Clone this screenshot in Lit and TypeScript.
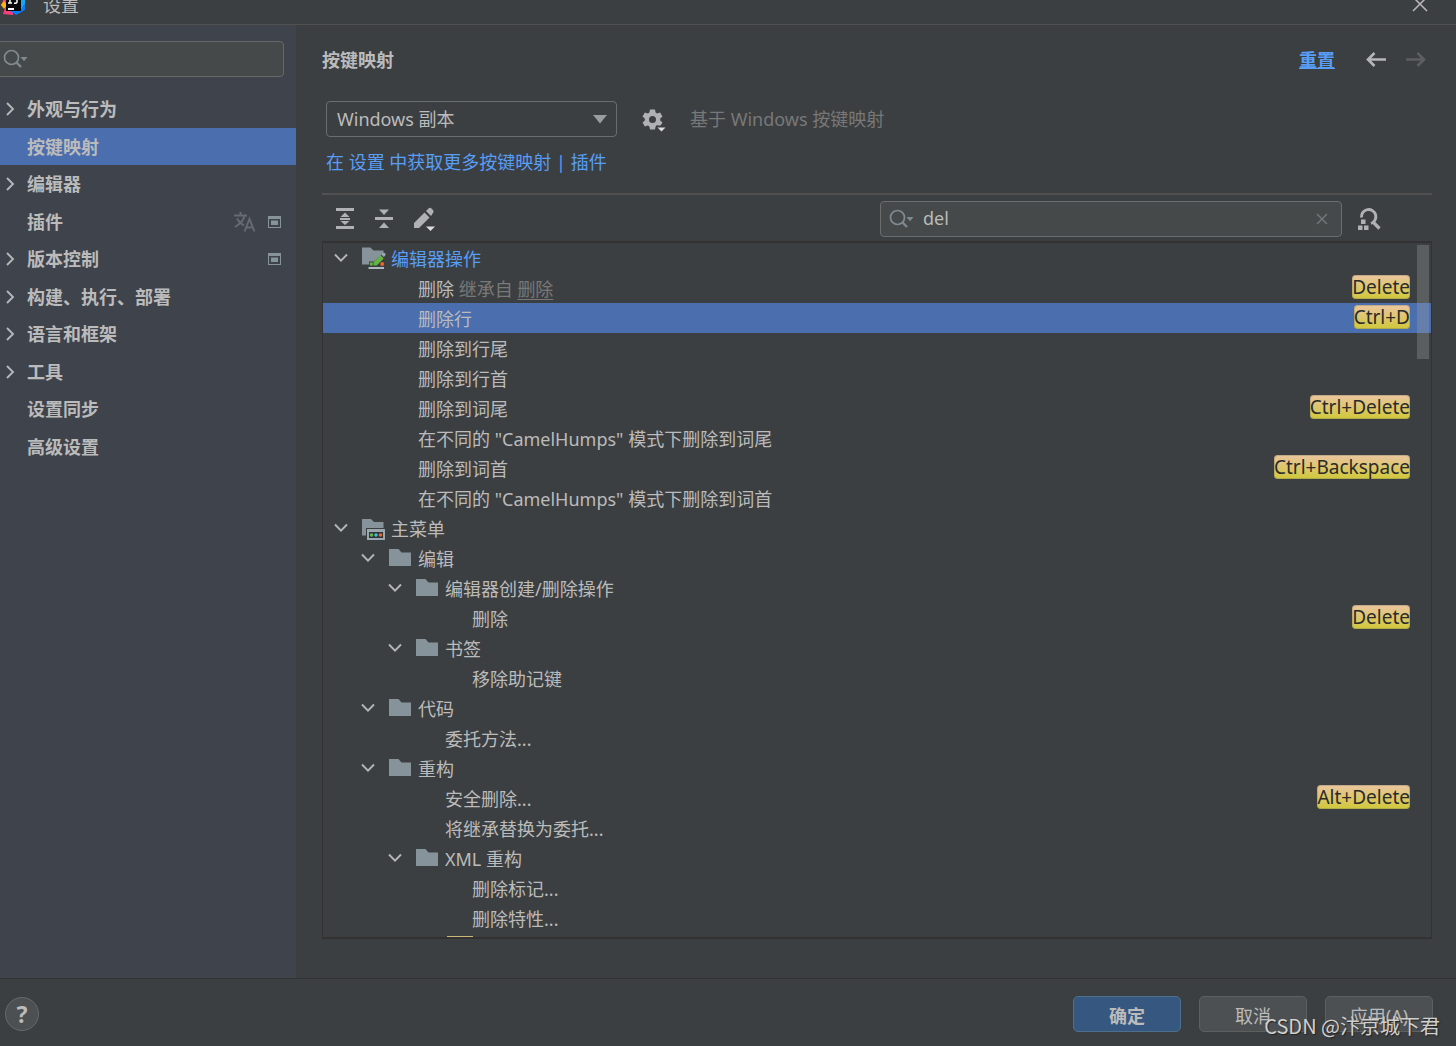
import { LitElement, html, css, svg, nothing } from "lit";
import { customElement, property, state } from "lit/decorators.js";
import { classMap } from "lit/directives/class-map.js";

type TreeIcon = "folder" | "editor" | "menu";

interface TreeRow {
  label: string;
  depth: number;
  icon?: TreeIcon;
  link?: boolean;
  inherited?: string;
  shortcut?: string;
}

interface NavItem {
  label: string;
  expandable?: boolean;
  translated?: boolean;
  project?: boolean;
}

const NAV: NavItem[] = [
  { label: "外观与行为", expandable: true },
  { label: "按键映射" },
  { label: "编辑器", expandable: true },
  { label: "插件", translated: true, project: true },
  { label: "版本控制", expandable: true, project: true },
  { label: "构建、执行、部署", expandable: true },
  { label: "语言和框架", expandable: true },
  { label: "工具", expandable: true },
  { label: "设置同步" },
  { label: "高级设置" },
];

const ROWS: TreeRow[] = [
  { label: "编辑器操作", depth: 0, icon: "editor", link: true },
  { label: "删除", depth: 1, inherited: "删除", shortcut: "Delete" },
  { label: "删除行", depth: 1, shortcut: "Ctrl+D" },
  { label: "删除到行尾", depth: 1 },
  { label: "删除到行首", depth: 1 },
  { label: "删除到词尾", depth: 1, shortcut: "Ctrl+Delete" },
  { label: '在不同的 "CamelHumps" 模式下删除到词尾', depth: 1 },
  { label: "删除到词首", depth: 1, shortcut: "Ctrl+Backspace" },
  { label: '在不同的 "CamelHumps" 模式下删除到词首', depth: 1 },
  { label: "主菜单", depth: 0, icon: "menu" },
  { label: "编辑", depth: 1, icon: "folder" },
  { label: "编辑器创建/删除操作", depth: 2, icon: "folder" },
  { label: "删除", depth: 3, shortcut: "Delete" },
  { label: "书签", depth: 2, icon: "folder" },
  { label: "移除助记键", depth: 3 },
  { label: "代码", depth: 1, icon: "folder" },
  { label: "委托方法...", depth: 2 },
  { label: "重构", depth: 1, icon: "folder" },
  { label: "安全删除...", depth: 2, shortcut: "Alt+Delete" },
  { label: "将继承替换为委托...", depth: 2 },
  { label: "XML 重构", depth: 2, icon: "folder" },
  { label: "删除标记...", depth: 3 },
  { label: "删除特性...", depth: 3 },
];

const searchIcon = html`<svg class="lens" width="26" height="20" viewBox="0 0 26 20" aria-hidden="true">
  <circle cx="8.5" cy="8.5" r="7" fill="none" stroke="#7f8b91" stroke-width="1.7" />
  <path d="M13.3 13.3 18 18" stroke="#7f8b91" stroke-width="2.3" />
  <path d="M17.5 8h7L21 12.2z" fill="#7f8b91" />
</svg>`;

const chevronDown = html`<svg width="18" height="12" viewBox="0 0 18 12" aria-hidden="true">
  <path d="M3 2.5 9 8.7 15 2.5" fill="none" stroke="#b4b6b8" stroke-width="1.9" />
</svg>`;

const chevronRight = html`<svg width="10" height="16" viewBox="0 0 10 16" aria-hidden="true">
  <path d="M2 2 8 8 2 14" fill="none" stroke="#b4b6b8" stroke-width="1.9" />
</svg>`;

function treeIcon(kind: TreeIcon) {
  const art =
    kind === "folder"
      ? svg`<path d="M0 3h9.5l3 3.500H22V20H0z" fill="#87939a" />`
      : kind === "editor"
        ? svg`<path d="M0 1.500h8.500l3 3H21.500V7L12 15.500H7V18.500H0z" fill="#87939a" />
            <path d="M11.500 19.500v-3.200l7-7 3.200 3.200-7 7z" fill="#62b543" />
            <path d="M19.300 8.500 20.800 7q1.200-.8 2.200.2t.2 2.200l-1.400 1.500z" fill="#9aa7b0" />
            <circle cx="9.300" cy="18" r="1.700" fill="#62b543" />
            <circle cx="20.200" cy="18" r="1.900" fill="#f26522" />
            <path d="M6.500 21h15.500v2H6.500z" fill="#aeb9c0" />`
        : svg`<path d="M0 3h9l3 3h9.500v6H4V19.500H0z" fill="#87939a" />
            <path d="M5 13h18v11H5z" fill="#9aa7b0" />
            <path d="M7 16h14v6H7z" fill="#2f3234" />
            <circle cx="9.500" cy="19" r="1.800" fill="#62b543" />
            <circle cx="14" cy="19" r="1.800" fill="#40b6e0" />
            <circle cx="18.500" cy="19" r="1.800" fill="#f26522" />`;
  return html`<svg width="24" height="24" viewBox="0 0 24 24" aria-hidden="true">${art}</svg>`;
}

const reset = css`
  * {
    box-sizing: border-box;
  }
  button,
  input,
  select {
    font: inherit;
    color: inherit;
    margin: 0;
  }
  button {
    padding: 0;
    border: 0;
    background: none;
  }
  svg {
    display: block;
    flex: none;
  }
`;

@customElement("settings-nav")
class SettingsNav extends LitElement {
  static styles = [
    reset,
    css`
      :host {
        display: block;
        padding-top: 16px;
        background: #3f434c;
        overflow: hidden;
      }
      .search {
        display: flex;
        align-items: center;
        height: 36px;
        margin: 0 12px 13px -4px;
        padding-left: 6px;
        gap: 4px;
        background: #45494a;
        border: 1px solid #66696a;
        border-radius: 4px;
      }
      .search input {
        flex: 1;
        min-width: 0;
        border: 0;
        outline: 0;
        background: none;
      }
      .items {
        display: grid;
        grid-auto-rows: 1fr;
        height: 375px;
        margin: 0;
        padding: 0;
        list-style: none;
      }
      .item {
        display: flex;
        align-items: center;
        width: 100%;
        height: 100%;
        padding: 1px 15px 0 5px;
        gap: 12px;
        font-weight: 700;
        text-align: left;
      }
      .item.selected {
        background: #4b6eaf;
      }
      .arrow {
        width: 10px;
      }
      .label {
        flex: 1;
      }
    `,
  ];

  @state() private selected = 1;

  render() {
    return html`
      <label class="search">
        ${searchIcon}
        <input type="text" aria-label="搜索设置" />
      </label>
      <ul class="items">
        ${NAV.map(
          (item, i) => html`<li>
            <button
              class=${classMap({ item: true, selected: i === this.selected })}
              @click=${() => (this.selected = i)}
            >
              <span class="arrow">${item.expandable ? chevronRight : nothing}</span>
              <span class="label">${item.label}</span>
              ${item.translated
                ? html`<svg width="22" height="20" viewBox="0 0 22 20" aria-hidden="true">
                    <g fill="none" stroke="#646b72" stroke-width="2">
                      <path d="M0 3.500h13M6.500 0v3.500M10.500 4C9.500 8 6 12 1 15M3 6.500c1.500 3 4 5.500 7 7" />
                      <path d="M10.500 19.500 15.500 7l5 12.500M12 15.500h7" />
                    </g>
                  </svg>`
                : nothing}
              ${item.project
                ? html`<svg width="13" height="12" viewBox="0 0 13 12" aria-hidden="true">
                    <path d="M0 0h13v12H0z" fill="#87939a" />
                    <path d="M1 3h11v8H1z" fill="#3f434c" />
                    <path d="M3 4.500h7v4.500H3z" fill="#87939a" />
                  </svg>`
                : nothing}
            </button>
          </li>`
        )}
      </ul>
    `;
  }
}

@customElement("keymap-tree")
class KeymapTree extends LitElement {
  static styles = [
    reset,
    css`
      :host {
        display: block;
        position: relative;
        overflow: hidden;
        border: 1px solid #323232;
        border-top-width: 2px;
        border-bottom-width: 2px;
      }
      .rows {
        margin: 0;
        padding: 0;
        list-style: none;
      }
      .row {
        display: flex;
        align-items: center;
        height: 30px;
        padding: 0 21px 0 9px;
      }
      .row.selected {
        background: #4b6eaf;
      }
      .toggle {
        width: 18px;
        height: 12px;
        margin-right: 12px;
      }
      .icon {
        width: 24px;
        height: 24px;
        margin-right: 5px;
      }
      .label {
        flex: 1;
        padding-top: 2px;
        line-height: 28px;
        white-space: pre;
      }
      .link {
        color: #589df6;
      }
      .muted {
        color: #787878;
      }
      .muted a {
        color: inherit;
        text-underline-offset: 3px;
      }
      kbd {
        height: 24px;
        margin-bottom: 2px;
        border-radius: 4px;
        background: linear-gradient(#ebc5a0, #d0c83a);
        box-shadow: inset 0 0 0 1px rgba(120, 120, 90, 0.35);
        color: #2b2b2b;
        font-family: "Noto Sans", "Noto Sans CJK SC", sans-serif;
        font-size: 19px;
        line-height: 24px;
      }
      .indent {
        flex: none;
      }
      .next {
        width: 26px;
        height: 1px;
        margin-top: 3px;
        margin-left: 124px;
        background: #c9b878;
      }
      .thumb {
        position: absolute;
        top: 2px;
        right: 2px;
        width: 12px;
        height: 114px;
        background: rgba(166, 166, 166, 0.3);
      }
    `,
  ];

  @state() private selected = 2;

  render() {
    return html`
      <ul class="rows" role="tree" aria-label="按键映射">
        ${ROWS.map(
          (row, i) => html`<li
            role="treeitem"
            aria-selected=${i === this.selected}
            class=${classMap({ row: true, selected: i === this.selected })}
            @click=${() => (this.selected = i)}
          >
            <span class="indent" style="width:${row.depth * 27}px"></span>
            ${row.icon
              ? html`<button class="toggle" aria-label="折叠">${chevronDown}</button>`
              : html`<span class="toggle"></span>`}
            <span class="icon">${row.icon ? treeIcon(row.icon) : nothing}</span>
            <span class=${classMap({ label: true, link: !!row.link })}
              >${row.label}${row.inherited
                ? html`<span class="muted"> 继承自 <a href="#inherited">${row.inherited}</a></span>`
                : nothing}</span
            >
            ${row.shortcut ? html`<kbd>${row.shortcut}</kbd>` : nothing}
          </li>`
        )}
      </ul>
      <div class="next"></div>
      <div class="thumb"></div>
    `;
  }
}

@customElement("app-root")
class AppRoot extends LitElement {
  static styles = [
    reset,
    css`
      :host {
        display: flex;
        flex-direction: column;
        position: relative;
        min-height: 100vh;
        overflow: hidden;
        background: #3c3f41;
        color: #bbbbbb;
        font: 18px/26px "Noto Sans", "Noto Sans CJK SC", sans-serif;
      }
      a {
        color: #589df6;
        text-decoration: none;
      }
      .titlebar {
        display: flex;
        align-items: center;
        height: 39px;
        margin-top: -14px;
        padding: 0 28px 0 1px;
        border-bottom: 1px solid #515151;
      }
      .titlebar h1 {
        flex: 1;
        margin: 0;
        padding-left: 17px;
        font-size: 18px;
        font-weight: 400;
      }
      .logo {
        margin-bottom: 4px;
      }
      .body {
        flex: 1;
        display: grid;
        grid-template-columns: 296px 1fr;
      }
      .content {
        display: flex;
        flex-direction: column;
        min-width: 0;
        padding: 22px 24px 39px 26px;
      }
      .head {
        display: flex;
        align-items: center;
        height: 26px;
        padding-right: 6px;
      }
      .head h2 {
        flex: 1;
        margin: 0;
        font-size: 18px;
      }
      .head a {
        margin-right: 31px;
        font-weight: 700;
        text-decoration: underline;
      }
      .head button + button {
        margin-left: 20px;
      }
      .scheme {
        display: flex;
        align-items: center;
        height: 36px;
        margin: 28px 0 12px 4px;
      }
      .combo {
        display: grid;
        width: 291px;
        height: 36px;
      }
      .combo select,
      .combo svg {
        grid-area: 1 / 1;
      }
      .combo select {
        appearance: none;
        padding: 0 32px 0 10px;
        border: 1px solid #6b6d6e;
        border-radius: 4px;
        background: #3c3f41;
      }
      .combo svg {
        align-self: center;
        justify-self: end;
        margin-right: 10px;
        pointer-events: none;
      }
      .gear {
        margin: 1px 24px 0 25px;
      }
      .muted {
        color: #787878;
      }
      .more {
        align-self: flex-start;
        margin-left: 4px;
      }
      .tools {
        display: flex;
        align-items: center;
        margin-top: 18px;
        height: 48px;
        padding: 2px 50px 0 12px;
        border-top: 2px solid #515151;
      }
      .tools > button {
        margin-right: 16px;
      }
      .filter {
        display: flex;
        align-items: center;
        width: 462px;
        height: 36px;
        margin-left: auto;
        padding: 0 12px 0 8px;
        border: 1px solid #6b6d6e;
        border-radius: 4px;
        background: #45494a;
      }
      .filter input {
        flex: 1;
        min-width: 0;
        padding: 0 0 2px 8px;
        border: 0;
        outline: 0;
        background: none;
      }
      .tools > .by-key {
        margin: 0 0 0 16px;
      }
      keymap-tree {
        flex: 1;
      }
      .footer {
        display: flex;
        align-items: center;
        gap: 18px;
        height: 68px;
        padding: 2px 23px 0 5px;
        border-top: 1px solid #323232;
      }
      .help {
        width: 34px;
        height: 34px;
        margin-right: auto;
        border: 1px solid #65696b;
        border-radius: 50%;
        background: #4c5052;
        font-size: 23px;
        font-weight: 700;
        line-height: 30px;
      }
      .btn {
        width: 108px;
        height: 36px;
        border: 1px solid #5e6060;
        border-radius: 5px;
        background: #4c5052;
        line-height: 34px;
        padding-top: 2px;
      }
      .btn.primary {
        border-color: #4c708c;
        background: #365880;
        font-weight: 700;
      }
      .mark {
        position: absolute;
        right: 16px;
        bottom: 5px;
        color: #d0d0d0;
        font: 20px/30px "Noto Sans CJK SC", sans-serif;
        text-shadow: 1px 1px 1px #222;
        pointer-events: none;
      }
    `,
  ];

  @property() query = "del";

  render() {
    return html`
      <header class="titlebar">
        <svg class="logo" width="25" height="24" viewBox="0 0 25 24" aria-hidden="true">
          <path d="M0 0h12v24L2 23 4 17 0 14 2 10z" fill="#fc3d7a" />
          <path d="M0 14 3 10 6 14 3 18z" fill="#fdb60d" />
          <path d="M10 0h14v19L15 24 9 20z" fill="#087cfa" />
          <path d="M18 0h6v12l-5 8z" fill="#18a7f5" />
          <path d="M5 2h15v18H5z" fill="#090909" />
          <path d="M7 17h6v2H7z" fill="#fff" />
          <path d="M7 6h4M9 6v6M7 12h4M13 6h3v5q0 1.500-3 1.200" fill="none" stroke="#fff" stroke-width="1.500" />
        </svg>
        <h1>设置</h1>
        <button aria-label="关闭">
          <svg width="16" height="16" viewBox="0 0 16 16" aria-hidden="true">
            <path d="M1 0 15 14M15 0 1 14" stroke="#b8b8b8" stroke-width="1.500" />
          </svg>
        </button>
      </header>

      <div class="body">
        <settings-nav></settings-nav>
        <main class="content">
          <div class="head">
            <h2>按键映射</h2>
            <a href="#reset">重置</a>
            <button aria-label="后退">
              <svg width="20" height="18" viewBox="0 0 20 18" aria-hidden="true">
                <path d="M20 8.500H2M8.500 2 2 8.500 8.500 15" fill="none" stroke="#b4b6b8" stroke-width="2.600" />
              </svg>
            </button>
            <button aria-label="前进">
              <svg width="20" height="18" viewBox="0 0 20 18" aria-hidden="true">
                <path d="M0 8.500h18M11.500 2 18 8.500 11.500 15" fill="none" stroke="#5c5e60" stroke-width="2.600" />
              </svg>
            </button>
          </div>

          <div class="scheme">
            <div class="combo">
              <select aria-label="按键映射方案">
                <option>Windows 副本</option>
              </select>
              <svg width="14" height="9" viewBox="0 0 14 9" aria-hidden="true">
                <path d="M0 0h14L7 8.500z" fill="#9a9da0" />
              </svg>
            </div>
            <button class="gear" aria-label="方案操作">
              <svg width="24" height="24" viewBox="0 0 24 24" aria-hidden="true">
                <path
                  fill="#afb1b3"
                  fill-rule="evenodd"
                  d="M8 1.500h5l.6 3 1.600.9 2.900-1 2.400 4.200-2.300 2v1.800l2.300 2-2.400 4.200-2.900-1-1.600.9-.6 3H8l-.6-3-1.600-.9-2.900 1L.5 14.400l2.300-2v-1.800l-2.300-2 2.400-4.200 2.900 1 1.600-.9zM10.500 8a3.500 3.500 0 1 0 0 7 3.500 3.500 0 0 0 0-7z"
                />
                <path d="M14 17.500h11v6H14z" fill="#3c3f41" />
                <path d="M15.500 19.500h8l-4 4z" fill="#dcdcdc" />
              </svg>
            </button>
            <span class="muted">基于 Windows 按键映射</span>
          </div>

          <a class="more" href="#plugins">在 设置 中获取更多按键映射 | 插件</a>

          <div class="tools">
            <button aria-label="全部展开">
              <svg width="22" height="22" viewBox="0 0 22 22" aria-hidden="true">
                <path d="M2 0h18v3H2zM2 18h18v3H2zM6 10h10v2H6zM11 4.500 15.500 9h-9zM11 17l-4.500-4h9z" fill="#afb1b3" />
              </svg>
            </button>
            <button aria-label="全部折叠">
              <svg width="24" height="22" viewBox="0 0 24 22" aria-hidden="true">
                <path d="M3 9h18v3H3zM7 1.500h10L12 7zM7 20h10l-5-5.500z" fill="#afb1b3" />
              </svg>
            </button>
            <button aria-label="编辑快捷键">
              <svg width="24" height="24" viewBox="0 0 24 24" aria-hidden="true">
                <path d="M2 16 12.500 5.500l5 5L7 21H2zM14 4l2.500-2.500q1.500-1.300 3 0l1.500 1.500q1.300 1.500 0 3L19 9z" fill="#afb1b3" />
                <path d="M14 19.500h9L18.500 24z" fill="#dcdcdc" />
              </svg>
            </button>
            <label class="filter">
              ${searchIcon}
              <input
                type="text"
                aria-label="按名称搜索"
                .value=${this.query}
                @input=${(e: Event) => (this.query = (e.target as HTMLInputElement).value)}
              />
              <button aria-label="清除" @click=${() => (this.query = "")}>
                <svg width="14" height="14" viewBox="0 0 14 14" aria-hidden="true">
                  <path d="M2 2 12 12M12 2 2 12" stroke="#6e7678" stroke-width="1.500" />
                </svg>
              </button>
            </label>
            <button class="by-key" aria-label="按快捷键查找">
              <svg width="24" height="24" viewBox="0 0 24 24" aria-hidden="true">
                <path d="M3.500 10.500A7.200 7.200 0 1 1 13 16.500" fill="none" stroke="#afb1b3" stroke-width="2.900" />
                <path d="m14.500 14.500 7 7" stroke="#afb1b3" stroke-width="3.200" />
                <path d="M3 12.500h4.500V17H3zM0 18.500h4.500V23H0zM6 18.500h4.500V23H6z" fill="#afb1b3" />
              </svg>
            </button>
          </div>

          <keymap-tree></keymap-tree>
        </main>
      </div>

      <footer class="footer">
        <button class="help" aria-label="帮助">?</button>
        <button class="btn primary">确定</button>
        <button class="btn">取消</button>
        <button class="btn">应用(A)</button>
      </footer>
      <div class="mark">CSDN @汴京城下君</div>
    `;
  }
}
